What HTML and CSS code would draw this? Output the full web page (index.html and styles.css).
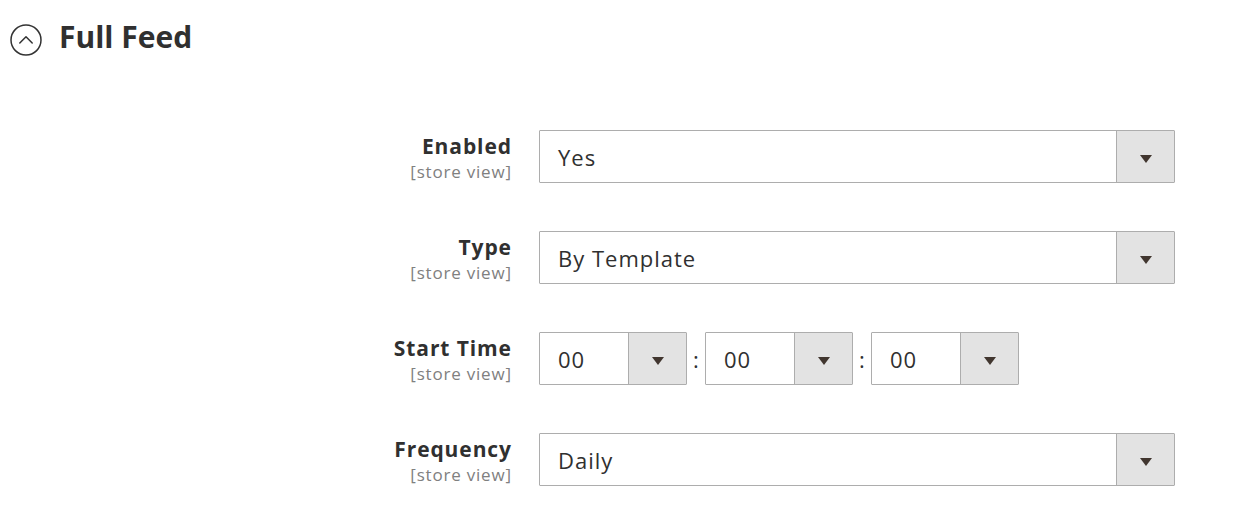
FILE: index.html
```html
<!DOCTYPE html>
<html>
<head>
<meta charset="utf-8">
<link rel="stylesheet" href="styles.css">
</head>
<body>
<div class="section">
  <div class="section-title">
    <svg class="toggle" width="32" height="32" viewBox="0 0 32 32">
      <circle cx="16" cy="16" r="15" fill="none" stroke="#333" stroke-width="1.5"/>
      <path d="M9.8 19 L16 12.8 L22.2 19" fill="none" stroke="#333" stroke-width="1.5" stroke-linecap="round" stroke-linejoin="round"/>
    </svg>
    <span class="title-text">Full Feed</span>
  </div>
  <div class="form">
    <div class="row">
      <div class="label"><span class="name">Enabled</span><span class="scope">[store view]</span></div>
      <div class="select wide"><span class="value">Yes</span><span class="btn"><i class="arrow"></i></span></div>
    </div>
    <div class="row">
      <div class="label"><span class="name">Type</span><span class="scope">[store view]</span></div>
      <div class="select wide"><span class="value">By Template</span><span class="btn"><i class="arrow"></i></span></div>
    </div>
    <div class="row">
      <div class="label"><span class="name">Start Time</span><span class="scope">[store view]</span></div>
      <div class="time">
        <div class="select small"><span class="value">00</span><span class="btn"><i class="arrow"></i></span></div>
        <span class="colon">:</span>
        <div class="select small"><span class="value">00</span><span class="btn"><i class="arrow"></i></span></div>
        <span class="colon">:</span>
        <div class="select small"><span class="value">00</span><span class="btn"><i class="arrow"></i></span></div>
      </div>
    </div>
    <div class="row">
      <div class="label"><span class="name">Frequency</span><span class="scope">[store view]</span></div>
      <div class="select wide"><span class="value">Daily</span><span class="btn"><i class="arrow"></i></span></div>
    </div>
  </div>
</div>
</body>
</html>
```
FILE: styles.css
```css
html, body {
  margin: 0;
  padding: 0;
  background: #ffffff;
}
body {
  font-family: "Open Sans", "Liberation Sans", sans-serif;
  color: #303030;
}
.section-title {
  display: flex;
  align-items: center;
  gap: 17px;
  padding: 24px 0 0 10px;
  height: 32px;
}
.toggle {
  display: block;
}
.title-text {
  font-size: 30px;
  line-height: 32px;
  font-weight: 700;
  color: #303030;
  margin-bottom: 7px;
}
.form {
  display: flex;
  flex-direction: column;
  gap: 48px;
  padding-top: 74px;
}
.row {
  display: flex;
  align-items: flex-start;
  gap: 28px;
  height: 53px;
}
.label {
  width: 511px;
  display: flex;
  flex-direction: column;
  align-items: flex-end;
  padding-top: 3px;
}
.name {
  font-size: 21px;
  font-weight: 700;
  letter-spacing: 0.9px;
  margin-right: -0.9px;
  line-height: 26px;
  color: #303030;
}
.scope {
  font-size: 17px;
  letter-spacing: 0.8px;
  margin-right: -0.8px;
  line-height: 24px;
  margin-top: 1px;
  color: #808080;
}
.select {
  display: flex;
  height: 53px;
  box-sizing: border-box;
  border: 1.5px solid #adadad;
  border-radius: 1px;
  background: #fff;
}
.select.wide {
  width: 636px;
}
.select.small {
  width: 148px;
}
.value {
  flex: 1;
  display: flex;
  align-items: center;
  padding-left: 18px;
  padding-top: 1px;
  font-size: 22px;
  letter-spacing: 1px;
  color: #303030;
}
.btn {
  width: 57px;
  background: #e3e3e3;
  border-left: 1.5px solid #adadad;
  display: flex;
  align-items: center;
  justify-content: center;
}
.arrow {
  width: 0;
  height: 0;
  border-left: 6.5px solid transparent;
  border-right: 6.5px solid transparent;
  border-top: 8px solid #41362f;
  margin-top: 4px;
}
.time {
  display: flex;
  align-items: center;
}
.colon {
  width: 18px;
  text-align: center;
  font-size: 22px;
  color: #303030;
}
```
